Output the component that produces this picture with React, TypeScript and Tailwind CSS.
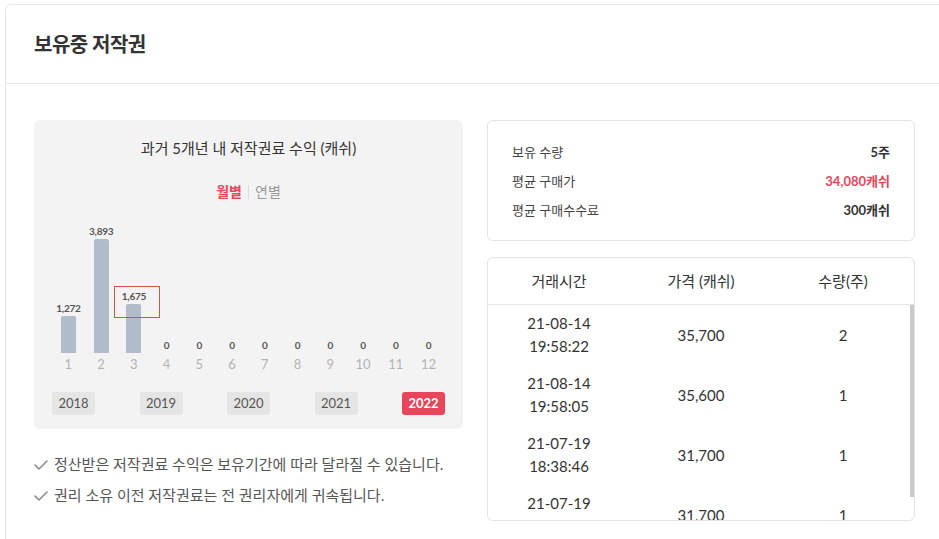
import React from 'react';

const monthly = [1272, 3893, 1675, 0, 0, 0, 0, 0, 0, 0, 0, 0];
const years = ['2018', '2019', '2020', '2021', '2022'];
const trades = [
  { date: '21-08-14', time: '19:58:22', price: '35,700', qty: 2 },
  { date: '21-08-14', time: '19:58:05', price: '35,600', qty: 1 },
  { date: '21-07-19', time: '18:38:46', price: '31,700', qty: 1 },
  { date: '21-07-19', time: '18:38:12', price: '31,700', qty: 1 },
];

const CheckIcon = () => (
  <svg width="14" height="12" viewBox="0 0 14 12" fill="none" className="shrink-0">
    <polyline points="1,6 5,10 13,2" stroke="#8a8a8a" strokeWidth="1.6" strokeLinecap="round" strokeLinejoin="round" />
  </svg>
);

const App: React.FC = () => {
  const max = Math.max(...monthly);

  return (
    <div className="h-[539px] w-[939px] overflow-hidden bg-white pl-[5px] pt-[4px] font-['Lato','Noto_Sans_CJK_KR',sans-serif] text-[#333]">
      <div className="w-[960px] h-[560px] rounded-md border border-[#e6e6e6]">
        {/* Header */}
        <div className="h-[79px] border-b border-[#e6e6e6] px-[28px] flex items-center">
          <h1 className="text-[20px] font-bold text-[#333] tracking-[-0.5px]">보유중 저작권</h1>
        </div>

        <div className="flex gap-[24px] pl-[28px] pt-[36px]">
          {/* Left column */}
          <div className="w-[429px]">
            <div className="relative rounded-md bg-[#f3f3f3] px-[18px] pt-[17px] pb-[14px]">
              <p className="text-center text-[15px] leading-[22px] text-[#333]">과거 5개년 내 저작권료 수익 (캐쉬)</p>
              <div className="mt-[23px] flex items-center justify-center text-[14px] leading-[20px]">
                <span className="font-bold text-[#e9455a]">월별</span>
                <span className="mx-[6px] h-[14px] w-px bg-[#dcdcdc]" />
                <span className="text-[#999]">연별</span>
              </div>

              <div className="flex h-[151px] items-end">
                {monthly.map((v, i) => (
                  <div key={i} className="flex flex-1 flex-col items-center justify-end">
                    <span className="mb-[2px] text-[10px] font-bold leading-[12px] tracking-[-0.3px] text-[#555]">
                      {v.toLocaleString('en-US')}
                    </span>
                    {v > 0 && (
                      <div
                        className="w-[15px] rounded-t-[2px] bg-[#b1bccb]"
                        style={{ height: `${Math.round((v / max) * 114)}px` }}
                      />
                    )}
                  </div>
                ))}
              </div>
              <div className="mt-[2px] flex">
                {monthly.map((_, i) => (
                  <span key={i} className="flex-1 text-center text-[13px] leading-[18px] text-[#b3b3b3]">
                    {i + 1}
                  </span>
                ))}
              </div>

              <div className="mt-[19px] flex justify-between">
                {years.map((y) => (
                  <button
                    key={y}
                    className={`h-[23px] w-[43px] rounded-[3px] text-[13px] leading-[23px] ${
                      y === '2022' ? 'bg-[#e9455a] font-bold text-white' : 'bg-[#e5e5e5] text-[#555]'
                    }`}
                  >
                    {y}
                  </button>
                ))}
              </div>

              {/* highlight annotation */}
              <div className="pointer-events-none absolute left-[80px] top-[166px] h-[32px] w-[46px] border-[1.5px] border-[#cc5a3f]" />
            </div>

            <ul className="mt-[20px] text-[15px] leading-[31px] text-[#555]">
              <li className="flex items-center gap-[6px]">
                <CheckIcon />
                정산받은 저작권료 수익은 보유기간에 따라 달라질 수 있습니다.
              </li>
              <li className="flex items-center gap-[6px]">
                <CheckIcon />
                권리 소유 이전 저작권료는 전 권리자에게 귀속됩니다.
              </li>
            </ul>
          </div>

          {/* Right column */}
          <div className="w-[428px]">
            <div className="rounded-md border border-[#e3e3e3] px-[24px] pt-[17px] pb-[15px] text-[13px] leading-[29px]">
              <div className="flex justify-between">
                <span className="text-[#444]">보유 수량</span>
                <span className="font-bold text-[#333]">5주</span>
              </div>
              <div className="flex justify-between">
                <span className="text-[#444]">평균 구매가</span>
                <span className="font-bold text-[#e9455a]">34,080캐쉬</span>
              </div>
              <div className="flex justify-between">
                <span className="text-[#444]">평균 구매수수료</span>
                <span className="font-bold text-[#333]">300캐쉬</span>
              </div>
            </div>

            <div className="mt-[16px] rounded-md border border-[#e3e3e3]">
              <div className="grid h-[47px] grid-cols-3 items-center border-b border-[#e6e6e6] text-center text-[15px] text-[#333]">
                <span>거래시간</span>
                <span>가격 (캐쉬)</span>
                <span>수량(주)</span>
              </div>
              <div className="relative h-[215px] overflow-hidden">
                {trades.map((t, i) => (
                  <div key={i} className="grid h-[60px] grid-cols-3 items-center text-center text-[15px] leading-[23px] text-[#333]">
                    <div>
                      <div>{t.date}</div>
                      <div>{t.time}</div>
                    </div>
                    <div>{t.price}</div>
                    <div>{t.qty}</div>
                  </div>
                ))}
                {/* scrollbar thumb */}
                <div className="absolute right-0 top-0 h-[192px] w-[4px] bg-[#c9c9c9]" />
              </div>
            </div>
          </div>
        </div>
      </div>
    </div>
  );
};

export default App;
